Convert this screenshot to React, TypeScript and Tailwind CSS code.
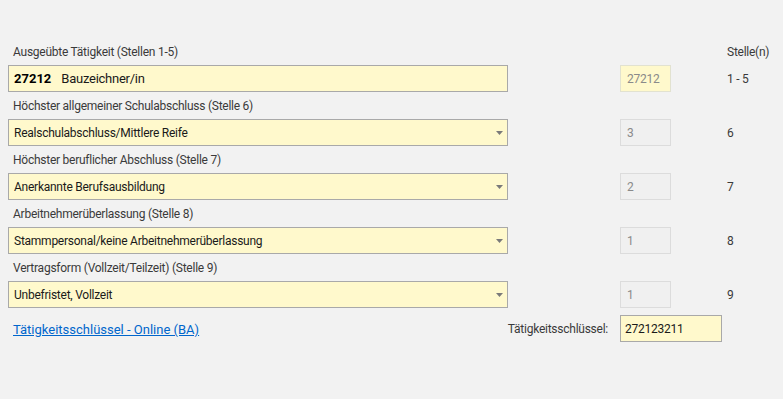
import React from "react";

type Row = {
  label: string;
  value: string;
  code: string;
  stelle: string;
  select: boolean;
};

const rows: Row[] = [
  { label: "Ausgeübte Tätigkeit (Stellen 1-5)", value: "Bauzeichner/in", code: "27212", stelle: "1 - 5", select: false },
  { label: "Höchster allgemeiner Schulabschluss (Stelle 6)", value: "Realschulabschluss/Mittlere Reife", code: "3", stelle: "6", select: true },
  { label: "Höchster beruflicher Abschluss (Stelle 7)", value: "Anerkannte Berufsausbildung", code: "2", stelle: "7", select: true },
  { label: "Arbeitnehmerüberlassung (Stelle 8)", value: "Stammpersonal/keine Arbeitnehmerüberlassung", code: "1", stelle: "8", select: true },
  { label: "Vertragsform (Vollzeit/Teilzeit) (Stelle 9)", value: "Unbefristet, Vollzeit", code: "1", stelle: "9", select: true },
];

const Arrow = () => (
  <svg width="7" height="4" viewBox="0 0 7 4" className="absolute right-[4px] top-[11px]">
    <polygon points="0,0 7,0 3.5,4" fill="#7a7a7a" />
  </svg>
);

const App: React.FC = () => {
  return (
    <div
      className="w-[783px] h-[399px] bg-[#f2f2f2] pt-[38px] pl-[8px] text-[12px] tracking-[-0.25px] text-[#3a3a3a]"
      style={{ fontFamily: 'Roboto, "Noto Sans", sans-serif' }}
    >
      {rows.map((row, i) => (
        <div key={i}>
          <div className="flex h-[27px] items-center">
            <div className="w-[500px] pl-[5px]">{row.label}</div>
            {i === 0 && <div className="ml-[219px]">Stelle(n)</div>}
          </div>
          <div className="flex h-[27px] items-center">
            <div className="relative w-[500px] h-[27px] bg-[#fff9cc] border border-[#a9a9a9] flex items-center pl-[5px] text-[#1a1a1a]">
              {row.select ? (
                <>
                  <span>{row.value}</span>
                  <Arrow />
                </>
              ) : (
                <>
                  <span className="font-bold text-[13px] tracking-normal text-black">{row.code}</span>
                  <span className="ml-[10px] text-[13px]">{row.value}</span>
                </>
              )}
            </div>
            <div
              className={
                "ml-[112px] w-[51px] h-[27px] border flex items-center pl-[6px] text-[#8a8a8a] " +
                (i === 0 ? "bg-[#fff9cc] border-[#e2e2d0]" : "bg-[#f0f0f0] border-[#dcdcdc]")
              }
            >
              {row.code}
            </div>
            <div className="ml-[56px]">{row.stelle}</div>
          </div>
        </div>
      ))}
      <div className="flex items-center mt-[7px] h-[27px]">
        <div className="w-[600px] flex items-center justify-between">
          <a href="#" className="pl-[5px] pt-[3px] text-[13px] tracking-normal text-[#0066cc] underline">
            Tätigkeitsschlüssel - Online (BA)
          </a>
          <span>Tätigkeitsschlüssel:</span>
        </div>
        <div className="ml-[12px] w-[102px] h-[27px] bg-[#fff9cc] border border-[#a9a9a9] flex items-center pl-[4px] text-[#1a1a1a]">
          272123211
        </div>
      </div>
    </div>
  );
};

export default App;
